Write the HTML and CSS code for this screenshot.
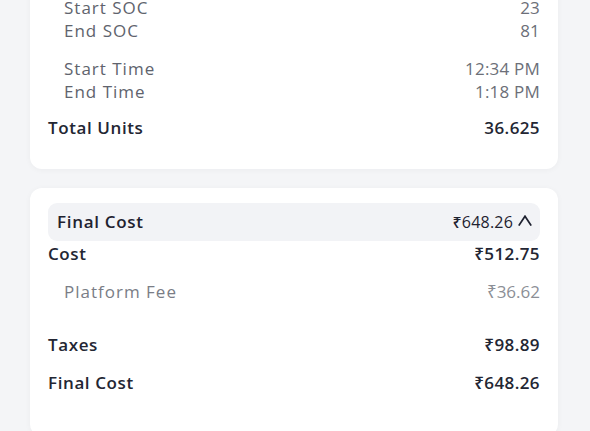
FILE: index.html
```html
<!DOCTYPE html>
<html>
<head>
<meta charset="utf-8">
<link rel="stylesheet" href="styles.css">
</head>
<body>
<div class="page">
  <section class="card card-top">
    <div class="group">
      <div class="row sub"><span class="lbl">Start SOC</span><span class="val">23</span></div>
      <div class="row sub"><span class="lbl">End SOC</span><span class="val">81</span></div>
    </div>
    <div class="group">
      <div class="row sub"><span class="lbl">Start Time</span><span class="val">12:34 PM</span></div>
      <div class="row sub"><span class="lbl">End Time</span><span class="val">1:18 PM</span></div>
    </div>
    <div class="row main total"><span class="lbl">Total Units</span><span class="val">36.625</span></div>
  </section>

  <section class="card card-cost">
    <div class="head">
      <span class="lbl">Final Cost</span>
      <span class="head-right">₹648.26
        <svg class="chev" width="14" height="11" viewBox="0 0 14 11"><polyline points="1.2,10 7,1.2 12.8,10" fill="none" stroke="#1f2230" stroke-width="1.7" stroke-linecap="round" stroke-linejoin="miter"/></svg>
      </span>
    </div>
    <div class="row main cost"><span class="lbl">Cost</span><span class="val">₹512.75</span></div>
    <div class="row fee"><span class="lbl">Platform Fee</span><span class="val">₹36.62</span></div>
    <div class="row main taxes"><span class="lbl">Taxes</span><span class="val">₹98.89</span></div>
    <div class="row main final"><span class="lbl">Final Cost</span><span class="val">₹648.26</span></div>
  </section>
</div>
</body>
</html>
```

FILE: styles.css
```css
* { box-sizing: border-box; }
html, body {
  margin: 0;
  padding: 0;
  background: #f4f5f7;
  width: 590px;
  height: 431px;
  overflow: hidden;
}
body {
  font-family: "Open Sans", "Noto Sans", "DejaVu Sans", sans-serif;
  color: #1f2230;
}
.page {
  padding: 0 32px 0 30px;
  display: flex;
  flex-direction: column;
}
.card {
  background: #ffffff;
  border-radius: 12px;
  box-shadow: 0 1px 6px rgba(30, 35, 60, 0.04);
  padding: 0 18px;
}
.card-top {
  margin-top: -30px;
  padding-top: 25.5px;
  padding-bottom: 28px;
}
.group + .group { margin-top: 15px; }
.row {
  display: flex;
  justify-content: space-between;
  align-items: center;
}
.sub {
  height: 23px;
  padding-left: 16px;
  font-size: 17px;
  color: #60636d;
}
.sub .lbl { letter-spacing: 1px; }
.sub .val { color: #6c6f78; letter-spacing: 0.2px; }
.main {
  font-size: 17px;
  font-weight: 600;
  color: #232633;
}
.main .lbl { letter-spacing: 0.6px; }
.main .val { letter-spacing: 0.4px; }
.total { height: 26px; margin-top: 12px; }

.card-cost {
  margin-top: 19px;
  padding-top: 15px;
  padding-bottom: 40px;
}
.head {
  height: 38px;
  background: #f2f3f6;
  border-radius: 9px;
  display: flex;
  justify-content: space-between;
  align-items: center;
  padding: 0 8px 0 9px;
  font-size: 17px;
  font-weight: 600;
  color: #1f2230;
}
.head .lbl { letter-spacing: 0.7px; }
.head-right {
  display: flex;
  align-items: center;
  gap: 5px;
  font-size: 16px;
  font-weight: 500;
  letter-spacing: 0.2px;
}
.chev { display: block; margin-top: -2px; }
.cost { height: 26px; }
.fee {
  height: 26px;
  margin-top: 12px;
  padding-left: 16px;
  font-size: 17px;
  color: #7a7d86;
}
.fee .lbl { letter-spacing: 1px; }
.fee .val { color: #8c8f96; }
.taxes { height: 26px; margin-top: 27px; }
.final { height: 26px; margin-top: 12px; }
```
